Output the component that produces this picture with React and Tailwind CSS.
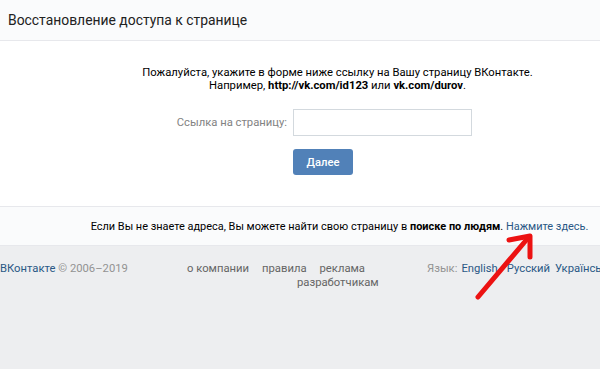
export default function App() {
  return (
    <div className="relative w-[600px] h-[369px] overflow-hidden bg-[#edeef0] text-[11.25px] leading-[13px] text-black" style={{ fontFamily: 'Roboto, "Open Sans", sans-serif' }}>
      <div className="h-[41px] bg-[#fafbfc] border-b border-[#e7e8ec] pl-[8px] flex items-center">
        <span className="text-[13.9px] text-[#222]">Восстановление доступа к странице</span>
      </div>
      <div className="bg-white h-[165px] pt-[25px]">
        <div className="ml-[75px] w-[525px] flex flex-col items-center">
          <div className="text-center">
            <div>Пожалуйста, укажите в форме ниже ссылку на Вашу страницу ВКонтакте.</div>
            <div>
              Например, <b className="font-bold">http://vk.com/id123</b> или <b className="font-bold">vk.com/durov</b>.
            </div>
          </div>
        </div>
        <div className="mt-[17px] flex items-center">
          <div className="w-[287px] shrink-0 text-right text-[#828282]">Ссылка на страницу:</div>
          <div className="ml-[6px] w-[179px] shrink-0 h-[27px] border border-[#d3d9de] bg-white"></div>
        </div>
        <div className="mt-[13px] pl-[293px]">
          <div className="w-[60px] h-[26px] rounded-[3px] bg-[#5181b8] text-white font-medium flex items-center justify-center">Далее</div>
        </div>
      </div>
      <div className="h-[40px] bg-[#fafbfc] border-y border-[#e7e8ec] flex items-center">
        <div className="ml-[77px] w-[525px] shrink-0 text-center whitespace-nowrap text-[10.95px]">
          Если Вы не знаете адреса, Вы можете найти свою страницу в <b className="font-bold">поиске по людям</b>. <span className="text-[#2a5885]">Нажмите здесь.</span>
        </div>
      </div>
      <div className="relative pt-[16px] text-[#656565]">
        <div className="flex whitespace-nowrap">
          <div className="w-[187px] shrink-0">
            <span className="text-[#2a5885]">ВКонтакте</span> <span className="text-[#939393]">© 2006–2019</span>
          </div>
          <div className="w-[240px] shrink-0">
            <div className="flex gap-[13px]">
              <span>о компании</span>
              <span>правила</span>
              <span>реклама</span>
            </div>
            <div className="pl-[110px] mt-[1px]">разработчикам</div>
          </div>
          <div className="flex shrink-0">
            <span className="text-[#939393]">Язык:</span>
            <span className="ml-[4px] text-[#2a5885]">English</span>
            <span className="ml-[9px] text-[#2a5885]">Русский</span>
            <span className="ml-[5px] text-[#2a5885]">Українська</span>
          </div>
        </div>
      </div>
      <svg className="absolute left-0 top-0 pointer-events-none" width="600" height="369" viewBox="0 0 600 369">
        <line x1="478" y1="297" x2="528" y2="238" stroke="#ec1212" strokeWidth="5" strokeLinecap="round" />
        <polyline points="509,240 530,236 530,257" fill="none" stroke="#ec1212" strokeWidth="5" strokeLinecap="round" strokeLinejoin="round" />
      </svg>
    </div>
  );
}
